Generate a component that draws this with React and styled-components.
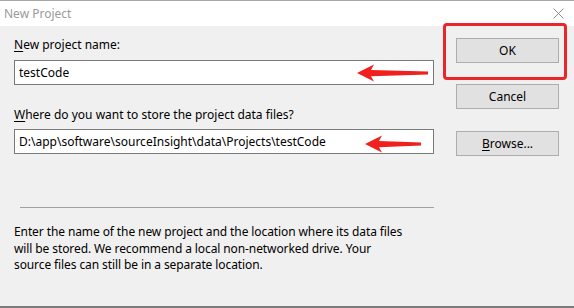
import React from "react";
import styled, { createGlobalStyle } from "styled-components";

const Global = createGlobalStyle`
  html, body { margin: 0; padding: 0; background: #f0f0f0; }
  body { font-family: "Noto Sans", "Open Sans", sans-serif; }
`;

const Window = styled.div`
  position: relative;
  width: 574px;
  height: 308px;
  box-sizing: border-box;
  border-top: 1px solid #a8a8a8;
  border-bottom: 2px solid #7a7a7a;
  display: flex;
  flex-direction: column;
  background: #f0f0f0;
  font-size: 12px;
  color: #000;
  overflow: hidden;
`;

const TitleBar = styled.div`
  height: 25px;
  background: #fff;
  display: flex;
  align-items: center;
  justify-content: space-between;
  padding: 0 10px 0 4px;
  flex-shrink: 0;
`;

const Title = styled.span`
  color: #9a9a9a;
  font-size: 12px;
  line-height: 16px;
`;

const Body = styled.div`
  flex: 1;
  display: flex;
  padding: 11px 0 0 14px;
`;

const Left = styled.div`
  width: 420px;
  display: flex;
  flex-direction: column;
`;

const Label = styled.div`
  line-height: 16px;
  height: 16px;
  margin-top: ${(p) => p.$mt || 0}px;
  white-space: nowrap;
`;

const Field = styled.div`
  height: 25px;
  box-sizing: border-box;
  border: 1px solid #7a7a7a;
  background: #fff;
  display: flex;
  align-items: center;
  padding-left: ${(p) => p.$pl || 4}px;
  margin-top: ${(p) => p.$mt || 0}px;
  white-space: nowrap;
`;

const Separator = styled.div`
  height: 1px;
  background: #a0a0a0;
  margin: 53px 0 0 6px;
`;

const Description = styled.p`
  margin: 16px 0 0;
  line-height: 16.6px;
  white-space: nowrap;
  letter-spacing: -0.1px;
`;

const Right = styled.div`
  margin-left: 22px;
  display: flex;
  flex-direction: column;
  padding-top: 1px;
`;

const Button = styled.div`
  width: 103px;
  height: 25px;
  box-sizing: border-box;
  border: 1px solid #adadad;
  background: #e1e1e1;
  display: flex;
  align-items: center;
  justify-content: center;
  margin-top: ${(p) => p.$mt || 0}px;
`;

const U = styled.span`
  text-decoration: underline;
  text-underline-offset: 2px;
`;

const Highlight = styled.div`
  position: absolute;
  left: 443px;
  top: 22px;
  width: 124px;
  height: 57px;
  box-sizing: border-box;
  border: 3px solid #e8262b;
  border-radius: 4px;
`;

const ArrowSvg = styled.svg`
  position: absolute;
  left: ${(p) => p.$x}px;
  top: ${(p) => p.$y}px;
`;

function Arrow({ x, y, len }) {
  return (
    <ArrowSvg $x={x} $y={y} width={len} height={18} viewBox={`0 0 ${len} 18`}>
      <path
        d={`M0 9 L17 0.5 L14 6 L${len} 7.6 L${len} 10.4 L14 12.2 L17 17.5 Z`}
        fill="#f0201e"
      />
    </ArrowSvg>
  );
}

function CloseIcon() {
  return (
    <svg width="11" height="11" viewBox="0 0 11 11">
      <path d="M0.5 0.5 L10.5 10.5 M10.5 0.5 L0.5 10.5" stroke="#8a8a8a" strokeWidth="1" />
    </svg>
  );
}

export default function App() {
  return (
    <>
      <Global />
      <Window>
        <TitleBar>
          <Title>New Project</Title>
          <CloseIcon />
        </TitleBar>
        <Body>
          <Left>
            <Label>
              <U>N</U>ew project name:
            </Label>
            <Field $mt={7}>testCode</Field>
            <Label $mt={22}>
              <U>W</U>here do you want to store the project data files?
            </Label>
            <Field $mt={6}>D:\app\software\sourceInsight\data\Projects\testCode</Field>
            <Separator />
            <Description>
              Enter the name of the new project and the location where its data files
              <br />
              will be stored. We recommend a local non-networked drive. Your
              <br />
              source files can still be in a separate location.
            </Description>
          </Left>
          <Right>
            <Button>OK</Button>
            <Button $mt={21}>Cancel</Button>
            <Button $mt={22}>
              <U>B</U>rowse...
            </Button>
          </Right>
        </Body>
        <Highlight />
        <Arrow x={357} y={63} len={71} />
        <Arrow x={365} y={134} len={56} />
      </Window>
    </>
  );
}
